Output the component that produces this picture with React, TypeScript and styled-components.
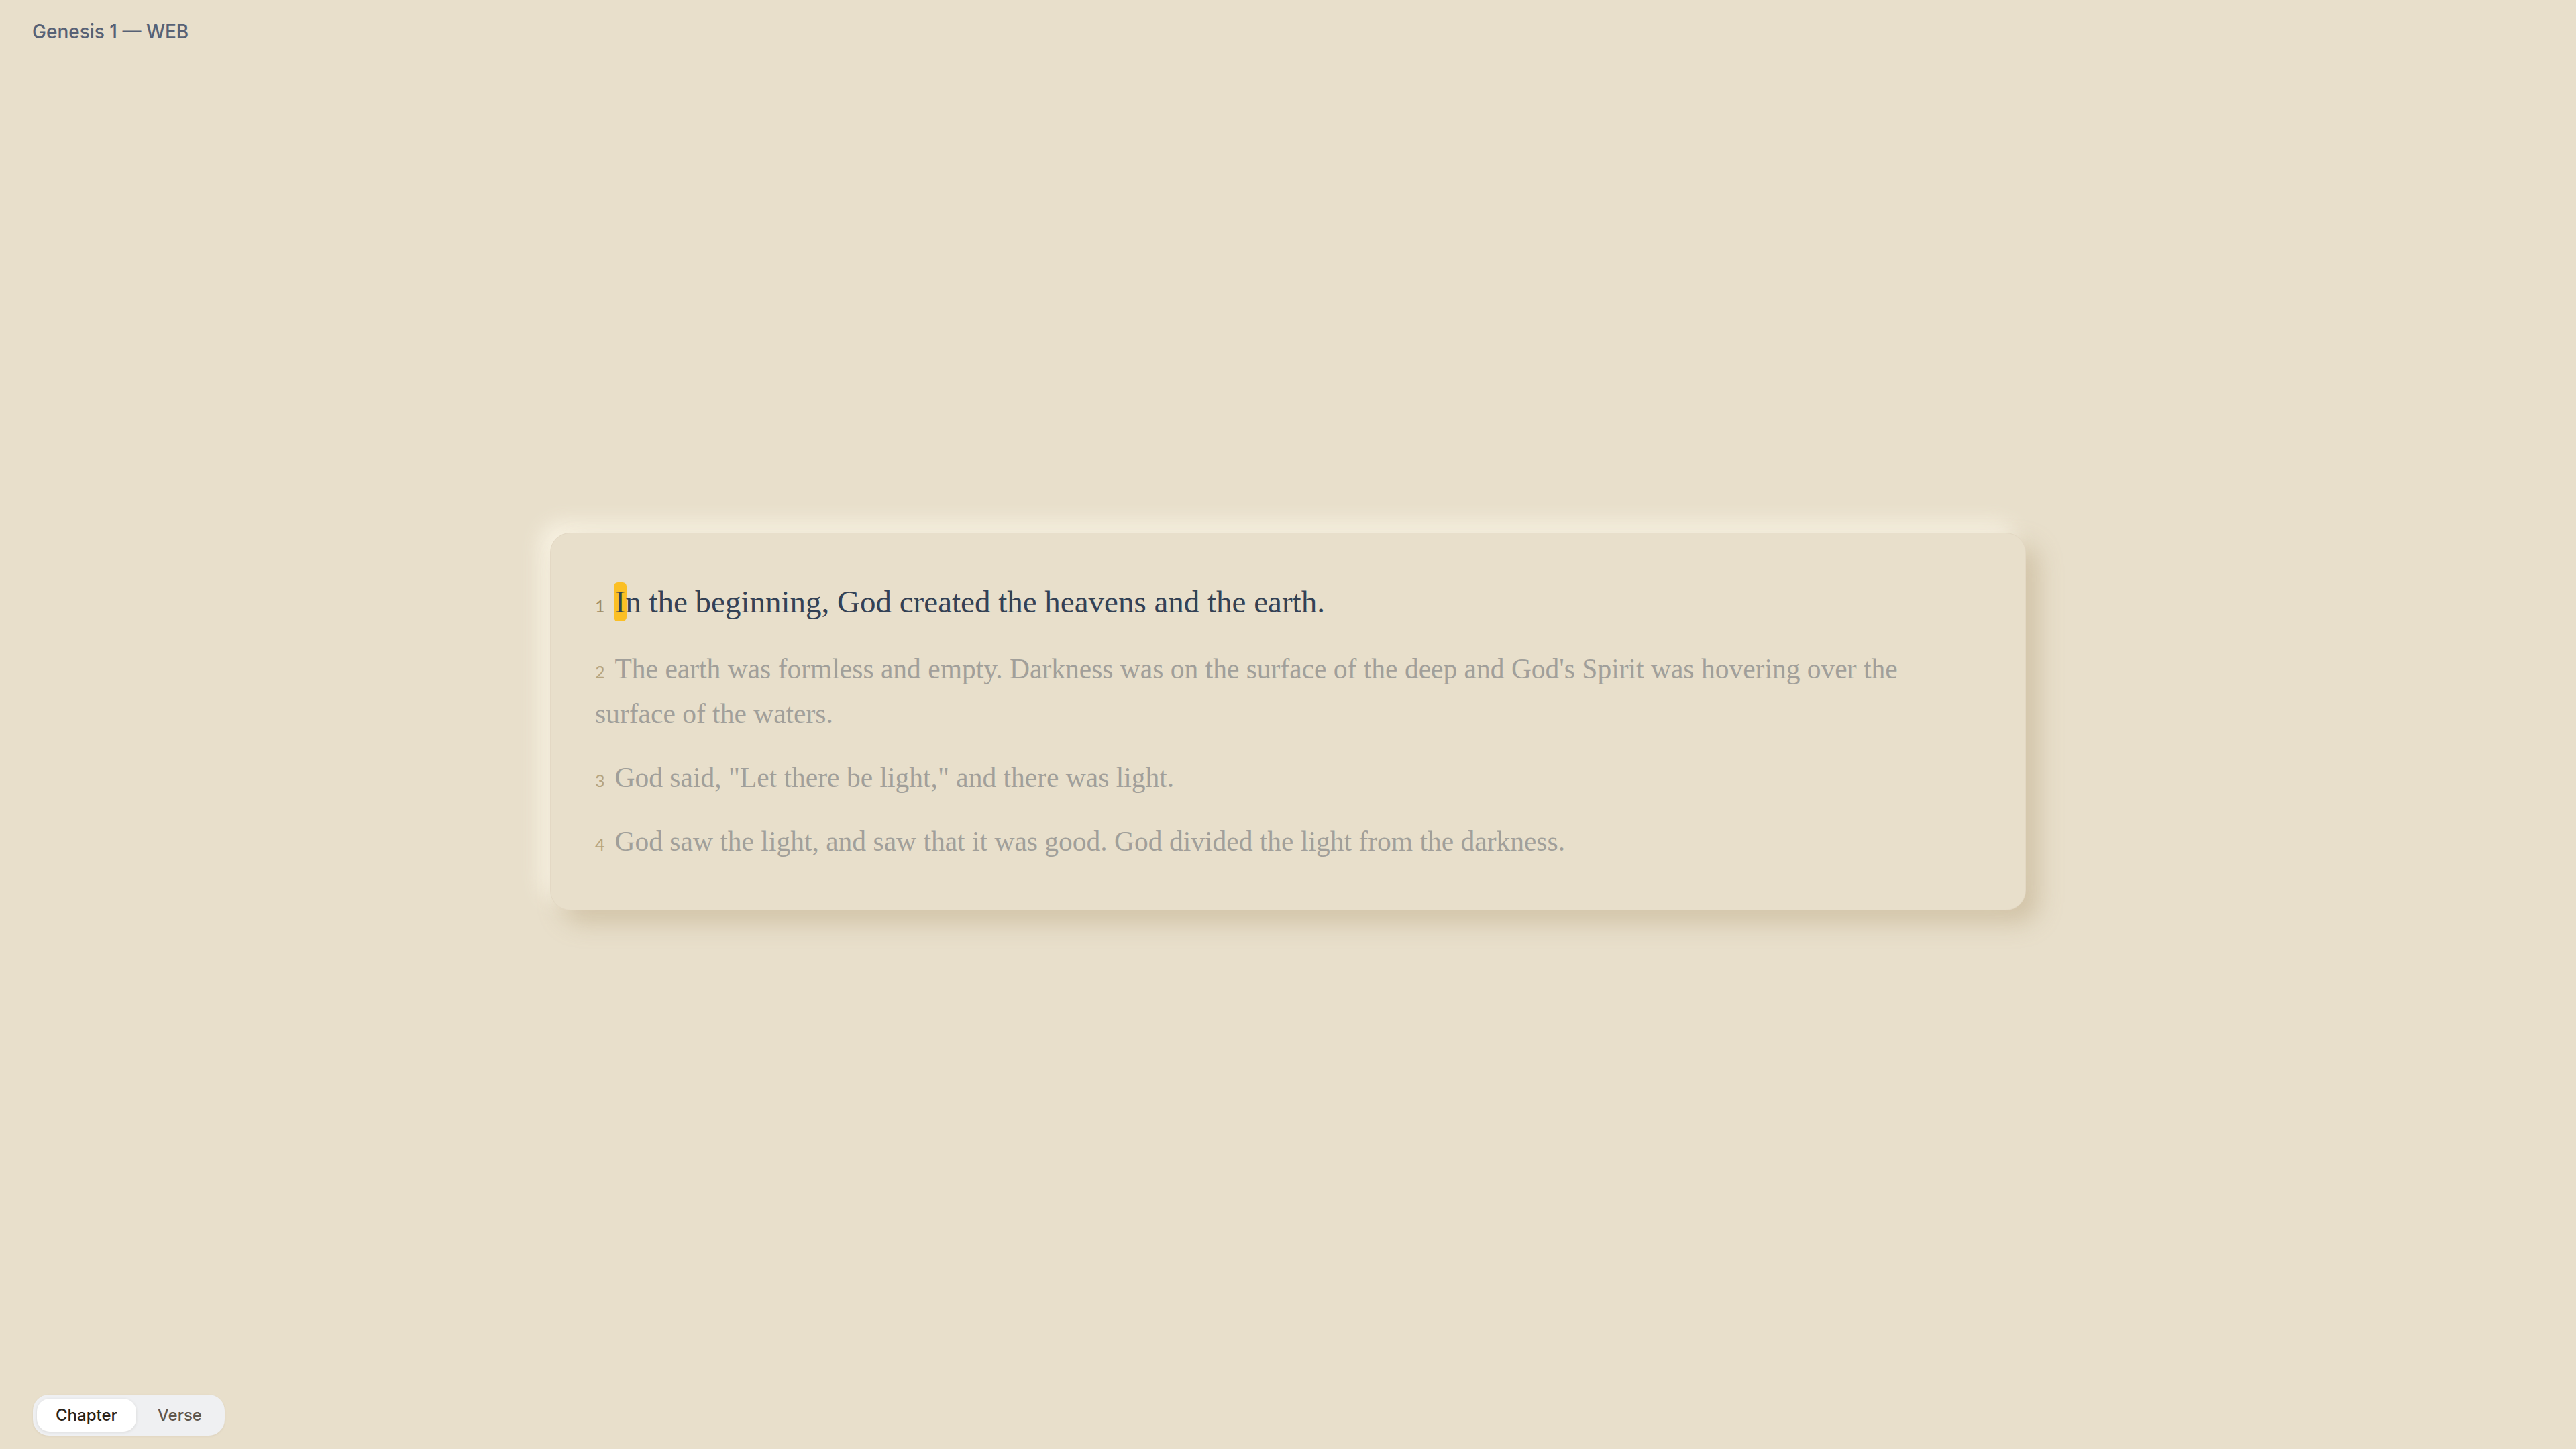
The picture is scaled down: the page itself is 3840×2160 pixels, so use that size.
import * as React from 'react';
import styled, { createGlobalStyle } from 'styled-components';

const GlobalStyle = createGlobalStyle`
  html, body {
    margin: 0;
    padding: 0;
    background: #e8dfcb;
  }
  body {
    font-family: Inter, "Liberation Sans", sans-serif;
  }
  * { box-sizing: border-box; }
`;

const Page = styled.div`
  min-height: 100vh;
  display: grid;
  grid-template-rows: auto 1fr auto;
  background: #e8dfcb;
`;

const Header = styled.header`
  padding: 30px 48px 0;
`;

const Title = styled.h1`
  margin: 0;
  font-family: Inter, "Liberation Sans", sans-serif;
  font-size: 28px;
  font-weight: 500;
  line-height: 34px;
  color: #576175;
`;

const Main = styled.main`
  display: flex;
  align-items: center;
  justify-content: center;
  padding-top: 8px;
`;

const Card = styled.section`
  width: 2200px;
  padding: 64px 90px 68px 66px;
  border-radius: 30px;
  background: #e8dfcb;
  border: 1px solid rgba(150, 125, 80, 0.06);
  box-shadow:
    18px 18px 36px rgba(170, 148, 105, 0.38),
    -14px -14px 32px rgba(255, 251, 238, 0.75);
  display: flex;
  flex-direction: column;
  gap: 28px;
`;

const Verse = styled.p<{ $active?: boolean }>`
  margin: 0;
  font-family: "Liberation Serif", "Times New Roman", serif;
  font-size: ${(p) => (p.$active ? '47px' : '41.5px')};
  line-height: ${(p) => (p.$active ? '76.5px' : '67px')};
  color: ${(p) => (p.$active ? '#334155' : '#a19f9a')};
`;

const Num = styled.span<{ $active?: boolean }>`
  font-family: Lato, "Open Sans", sans-serif;
  font-size: 25px;
  line-height: 1;
  margin-right: 15px;
  color: ${(p) => (p.$active ? '#9f8b62' : '#b6a47e')};
`;

const Mark = styled.span`
  background: #fbbf24;
  border-radius: 6px;
  padding: 3px 2px;
  margin: 0 -2px;
`;

const Footer = styled.footer`
  display: flex;
  padding: 0 0 20px 49px;
`;

const Toggle = styled.div`
  display: flex;
  gap: 4px;
  padding: 6px;
  border-radius: 24px;
  background: #eff0f2;
  box-shadow: 0 1px 3px rgba(120, 100, 70, 0.12);
`;

const ToggleButton = styled.button<{ $on?: boolean }>`
  border: none;
  cursor: pointer;
  font-family: Inter, "Liberation Sans", sans-serif;
  font-size: 24px;
  font-weight: 500;
  line-height: 29px;
  padding: 10px 28px;
  border-radius: 19px;
  background: ${(p) => (p.$on ? '#ffffff' : 'transparent')};
  color: ${(p) => (p.$on ? '#2b2218' : '#5f574d')};
  box-shadow: ${(p) => (p.$on ? '0 1px 4px rgba(60, 50, 30, 0.12)' : 'none')};
`;

const verses = [
  "The earth was formless and empty. Darkness was on the surface of the deep and God's Spirit was hovering over the surface of the waters.",
  'God said, "Let there be light," and there was light.',
  'God saw the light, and saw that it was good. God divided the light from the darkness.',
];

export default function App() {
  const [mode, setMode] = React.useState<'chapter' | 'verse'>('chapter');
  return (
    <Page>
      <GlobalStyle />
      <Header>
        <Title>Genesis 1 — WEB</Title>
      </Header>
      <Main>
        <Card>
          <Verse $active>
            <Num $active>1</Num>
            <Mark>I</Mark>n the beginning, God created the heavens and the earth.
          </Verse>
          {verses.map((v, i) => (
            <Verse key={i}>
              <Num>{i + 2}</Num>
              {v}
            </Verse>
          ))}
        </Card>
      </Main>
      <Footer>
        <Toggle>
          <ToggleButton $on={mode === 'chapter'} onClick={() => setMode('chapter')}>
            Chapter
          </ToggleButton>
          <ToggleButton $on={mode === 'verse'} onClick={() => setMode('verse')}>
            Verse
          </ToggleButton>
        </Toggle>
      </Footer>
    </Page>
  );
}
